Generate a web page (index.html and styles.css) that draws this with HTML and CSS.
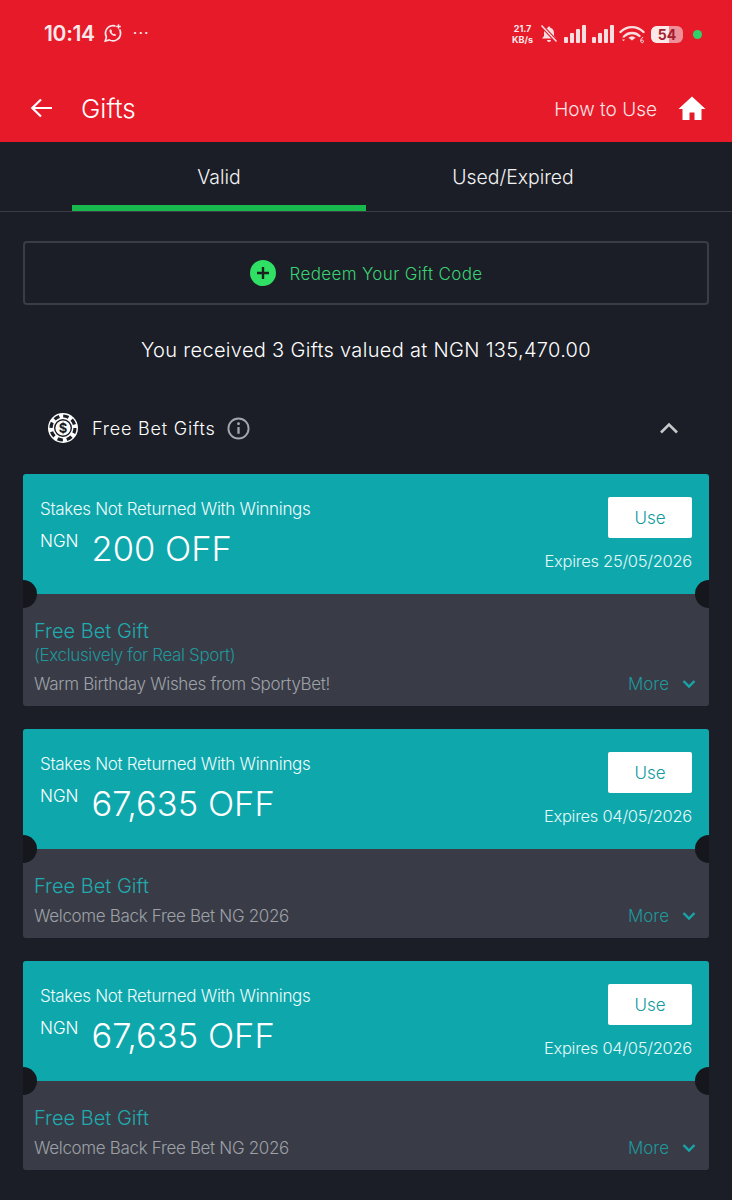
FILE: index.html
```html
<!DOCTYPE html>
<html lang="en">
<head>
<meta charset="utf-8">
<title>Gifts</title>
<link rel="stylesheet" href="styles.css">
</head>
<body>
<header class="top">
  <div class="status">
    <div class="status-left">
      <span class="clock">10:14</span>
      <svg class="wa" viewBox="0 0 20 20" width="20" height="20" fill="none" stroke="#fbe9ea" stroke-width="1.600"><path d="M2.200 18l1.200-4a7.600 7.600 0 1 1 2.900 2.900z"/><path d="M7 6.400c-.6.600-.7 1.700-.1 3 .8 1.500 2.100 2.800 3.700 3.400 1.200.4 2.100 0 2.600-.8l-1.500-1.300-1 .6c-1-.4-1.800-1.200-2.300-2.200l.7-.9-.9-1.800z" fill="#fbe9ea" stroke="none"/><path d="M15.500 .5v6M12.500 3.500h6" stroke="#e71a2a" stroke-width="3.600"/><path d="M15.500 1.200v4.600M13.200 3.500h4.600" stroke-width="1.400"/></svg>
      <span class="dots">···</span>
    </div>
    <div class="status-right">
      <span class="speed"><b>21.7</b><b>KB/s</b></span>
      <svg viewBox="0 0 20 20" width="20" height="20" fill="#f7dfe1"><path d="M10 2.500a1.300 1.300 0 0 1 1.300 1.200c2.500.7 3.700 2.800 3.700 5.300v3l2 2.500H3l2-2.500V9c0-2.500 1.200-4.600 3.700-5.300A1.300 1.300 0 0 1 10 2.500zM8 16h4a2 2 0 0 1-4 0z"/><path d="M2.500 1.500l15 16" stroke="#e71a2a" stroke-width="3.500"/><path d="M2.500 1.500l15 16" stroke="#f7dfe1" stroke-width="1.600"/></svg>
      <svg viewBox="0 0 24 18" width="24" height="18" fill="#f7dfe1"><rect x="1" y="12" width="4" height="6" rx="1"/><rect x="7" y="8" width="4" height="10" rx="1"/><rect x="13" y="4" width="4" height="14" rx="1"/><rect x="19" y="0" width="4" height="18" rx="1"/></svg>
      <svg viewBox="0 0 24 18" width="24" height="18" fill="#f7dfe1"><rect x="1" y="12" width="4" height="6" rx="1"/><rect x="7" y="8" width="4" height="10" rx="1"/><rect x="13" y="4" width="4" height="14" rx="1"/><rect x="19" y="0" width="4" height="18" rx="1"/></svg>
      <svg viewBox="0 0 26 20" width="26" height="20" fill="none" stroke="#f7dfe1" stroke-width="2.400" stroke-linecap="round"><path d="M1.500 8c6.500-6.500 16.500-6.500 23 0"/><path d="M5.500 12c4-4 11-4 15 0"/><path d="M13 16.500l-3.600-2.800a5.500 5.500 0 0 1 7.200 0z" fill="#f7dfe1" stroke="none"/><path d="M3 13.500l1.500-1.700 1.500 1.700zM3 15.500l1.500 1.700 1.500-1.700z" fill="#f7dfe1" stroke="none"/><path d="M23.800 13.500c-1.500.3-2 1.500-2 3s.5 2.300 1.400 2.300 1.300-.7 1.300-1.400-.5-1.400-1.300-1.400-1.400.4-1.400 1" stroke-width="1" /></svg>
      <span class="battery"><span class="battery-level"></span><span class="battery-num">54</span></span>
      <span class="dot"></span>
    </div>
  </div>
  <div class="appbar">
    <div class="appbar-left">
      <svg viewBox="0 0 24 24" width="24" height="24" fill="none" stroke="#fff" stroke-width="2.200"><path d="M23 12H3M12 3.500L3.300 12l8.700 8.500"/></svg>
      <span class="title">Gifts</span>
    </div>
    <div class="appbar-right">
      <span class="howto">How to Use</span>
      <svg viewBox="0 0 28 24" width="28" height="24" fill="#fff"><path d="M14 .5L.5 13h4v11h7v-7.500h5V24h7V13h4z"/></svg>
    </div>
  </div>
</header>

<nav class="tabs">
  <div class="tab tab-on">Valid</div>
  <div class="tab">Used/Expired</div>
</nav>

<main class="content">
  <div class="redeem">
    <svg viewBox="0 0 26 26" width="26" height="26"><circle cx="13" cy="13" r="13" fill="#2fe065"/><path d="M13 7v12M7 13h12" stroke="#16231c" stroke-width="2.400"/></svg>
    <span class="redeem-label">Redeem Your Gift Code</span>
  </div>
  <p class="summary">You received 3 Gifts valued at NGN 135,470.00</p>
  <div class="section-head">
    <div class="section-left">
      <svg viewBox="0 0 30 30" width="30" height="30"><circle cx="15" cy="15" r="15" fill="#fff"/><circle cx="15" cy="15" r="12" fill="none" stroke="#1b1e26" stroke-width="3.200" stroke-dasharray="5.500 3.900"/><circle cx="15" cy="15" r="8.300" fill="#fff" stroke="#1b1e26" stroke-width="1.400"/><text class="chip-sign" x="15" y="19.600" text-anchor="middle">$</text></svg>
      <span class="section-title">Free Bet Gifts</span>
      <svg class="info" viewBox="0 0 24 24" width="23" height="23" fill="none" stroke="#a3a6ad" stroke-width="2"><circle cx="12" cy="12" r="10.500"/><path d="M12 10.500v7" stroke-width="2.400"/><circle cx="12" cy="7" r="1.500" fill="#a3a6ad" stroke="none"/></svg>
    </div>
    <svg viewBox="0 0 20 12" width="20" height="12" fill="none" stroke="#c6c8cc" stroke-width="2.600"><path d="M2 10.500l8-8 8 8"/></svg>
  </div>

  <section class="gift">
    <div class="gift-top">
      <div class="gift-info">
        <div class="stakes">Stakes Not Returned With Winnings</div>
        <div class="amount"><span class="cur">NGN</span><span class="val">200 OFF</span></div>
      </div>
      <div class="gift-action">
        <div class="use">Use</div>
        <div class="expires">Expires 25/05/2026</div>
      </div>
      <span class="hole hole-l"></span><span class="hole hole-r"></span>
    </div>
    <div class="gift-bottom">
      <div class="g-title">Free Bet Gift</div>
      <div class="g-sub">(Exclusively for Real Sport)</div>
      <div class="g-row">
        <span>Warm Birthday Wishes from SportyBet!</span>
        <span class="more">More<svg viewBox="0 0 14 10" width="14" height="10" fill="none" stroke="#16a5a9" stroke-width="2.400"><path d="M1.500 2l5.500 5.500L12.500 2"/></svg></span>
      </div>
    </div>
  </section>

  <section class="gift">
    <div class="gift-top">
      <div class="gift-info">
        <div class="stakes">Stakes Not Returned With Winnings</div>
        <div class="amount"><span class="cur">NGN</span><span class="val">67,635 OFF</span></div>
      </div>
      <div class="gift-action">
        <div class="use">Use</div>
        <div class="expires">Expires 04/05/2026</div>
      </div>
      <span class="hole hole-l"></span><span class="hole hole-r"></span>
    </div>
    <div class="gift-bottom">
      <div class="g-title">Free Bet Gift</div>
      <div class="g-row">
        <span>Welcome Back Free Bet NG 2026</span>
        <span class="more">More<svg viewBox="0 0 14 10" width="14" height="10" fill="none" stroke="#16a5a9" stroke-width="2.400"><path d="M1.500 2l5.500 5.500L12.500 2"/></svg></span>
      </div>
    </div>
  </section>

  <section class="gift">
    <div class="gift-top">
      <div class="gift-info">
        <div class="stakes">Stakes Not Returned With Winnings</div>
        <div class="amount"><span class="cur">NGN</span><span class="val">67,635 OFF</span></div>
      </div>
      <div class="gift-action">
        <div class="use">Use</div>
        <div class="expires">Expires 04/05/2026</div>
      </div>
      <span class="hole hole-l"></span><span class="hole hole-r"></span>
    </div>
    <div class="gift-bottom">
      <div class="g-title">Free Bet Gift</div>
      <div class="g-row">
        <span>Welcome Back Free Bet NG 2026</span>
        <span class="more">More<svg viewBox="0 0 14 10" width="14" height="10" fill="none" stroke="#16a5a9" stroke-width="2.400"><path d="M1.500 2l5.500 5.500L12.500 2"/></svg></span>
      </div>
    </div>
  </section>
</main>
</body>
</html>
```
FILE: styles.css
```css
* { box-sizing: border-box; }
html, body { margin: 0; padding: 0; }
body {
  width: 732px;
  height: 1200px;
  overflow: hidden;
  background: #1b1e26;
  color: #fff;
  font-family: "Inter", "Liberation Sans", sans-serif;
}
.top { height: 142px; background: #e71a2a; display: flex; flex-direction: column; }
.status { height: 74px; display: flex; justify-content: space-between; align-items: flex-start; padding: 22px 30px 0 44px; }
.status-left { display: flex; align-items: center; gap: 8px; height: 24px; margin-top: -1px; }
.clock { font-size: 21px; font-weight: 600; color: #fbe9ea; letter-spacing: -0.3px; }
.dots { font-size: 16px; color: #fbe9ea; letter-spacing: 1px; margin-left: 2px; }
.status-right { display: flex; align-items: center; gap: 4px; height: 24px; }
.speed { display: flex; flex-direction: column; align-items: center; font-size: 9px; line-height: 11px; color: #fbe9ea; margin-right: 2px; }
.speed b { font-weight: 700; }
.battery { position: relative; width: 32px; height: 17px; border-radius: 6px; background: #ef8f97; overflow: hidden; display: flex; align-items: center; justify-content: center; margin-left: 2px; }
.battery-level { position: absolute; left: 0; top: 0; bottom: 0; width: 56%; background: #fbe9ea; }
.battery-num { position: relative; font-size: 14px; font-weight: 700; color: #a3202e; }
.dot { width: 9px; height: 9px; border-radius: 50%; background: #2fd16a; margin-left: 6px; }
.appbar { flex: 1; display: flex; justify-content: space-between; align-items: center; padding: 0 26px 0 29px; }
.appbar-left { display: flex; align-items: center; gap: 28px; }
.title { font-size: 26px; font-weight: 300; }
.appbar-right { display: flex; align-items: center; gap: 21px; }
.howto { font-size: 19px; font-weight: 300; color: #fbe3e5; position: relative; top: 1px; }
.tabs { height: 70px; display: flex; padding: 0 0 0 72px; border-bottom: 1px solid #3a3d46; }
.tab { width: 294px; display: flex; align-items: center; justify-content: center; font-size: 19.400px; font-weight: 300; padding-top: 1px; color: #f2f2f3; }
.tab-on { border-bottom: 6px solid #17b84c; padding-top: 6px; }
.content { padding: 29px 23px 0; display: flex; flex-direction: column; }
.redeem { height: 64px; border: 2px solid #3a3d46; border-radius: 4px; display: flex; align-items: center; justify-content: center; gap: 14px; color: #3ad274; font-size: 17px; font-weight: 300; letter-spacing: 0.36px; }
.redeem-label { padding-top: 2px; }
.summary { margin: 32px 0 0; height: 26px; line-height: 26px; text-align: center; font-size: 20px; font-weight: 300; letter-spacing: 0.32px; }
.section-head { height: 60px; margin-top: 35px; margin-bottom: 16px; display: flex; align-items: center; justify-content: space-between; padding: 0 30px 0 25px; }
.section-left { display: flex; align-items: center; gap: 14px; }
.section-title { font-size: 18px; font-weight: 300; letter-spacing: 0.8px; }
.info { margin-left: -3px; }
.chip-sign { font-size: 13px; font-weight: 700; fill: #1b1e26; font-family: "Inter", sans-serif; }
.gift { margin-bottom: 23px; border-radius: 3px; overflow: hidden; background: #393c46; }
.gift-top { position: relative; height: 120px; background: #0ea7ac; padding: 23px 17px 0; display: flex; justify-content: space-between; overflow: visible; }
.stakes { font-size: 17px; font-weight: 300; letter-spacing: -0.3px; line-height: 26px; color: #ecfbfb; margin-top: -1px; }
.amount { display: flex; align-items: flex-start; margin-top: 5px; }
.cur { font-size: 17px; font-weight: 300; line-height: 20px; margin-top: 4px; }
.val { font-size: 34.500px; font-weight: 300; line-height: 44px; margin-left: 13px; }
.gift-action { display: flex; flex-direction: column; align-items: flex-end; }
.use { width: 84px; height: 41px; background: #fff; border-radius: 2px; display: flex; align-items: center; justify-content: center; color: #0f9a9f; font-size: 17px; font-weight: 300; }
.expires { margin-top: 10px; font-size: 16.500px; font-weight: 300; letter-spacing: -0.28px; line-height: 26px; color: #e3f8f8; }
.hole { position: absolute; bottom: -14px; width: 14px; height: 28px; background: #15171d; }
.hole-l { left: 0; border-radius: 0 14px 14px 0; }
.hole-r { right: 0; border-radius: 14px 0 0 14px; }
.gift-bottom { padding: 26px 13px 9px 11px; }
.g-title { font-size: 20px; font-weight: 300; line-height: 25px; color: #20abb0; margin-top: -1px; }
.g-sub { font-size: 17px; font-weight: 300; letter-spacing: -0.37px; line-height: 23px; color: #1f979c; }
.g-row { display: flex; justify-content: space-between; align-items: center; font-size: 17px; font-weight: 300; letter-spacing: -0.33px; line-height: 26px; color: #9fa1a8; margin-top: 4px; }
.more { display: flex; align-items: center; gap: 13px; color: #1f979c; font-size: 17px; letter-spacing: 0; }
```
